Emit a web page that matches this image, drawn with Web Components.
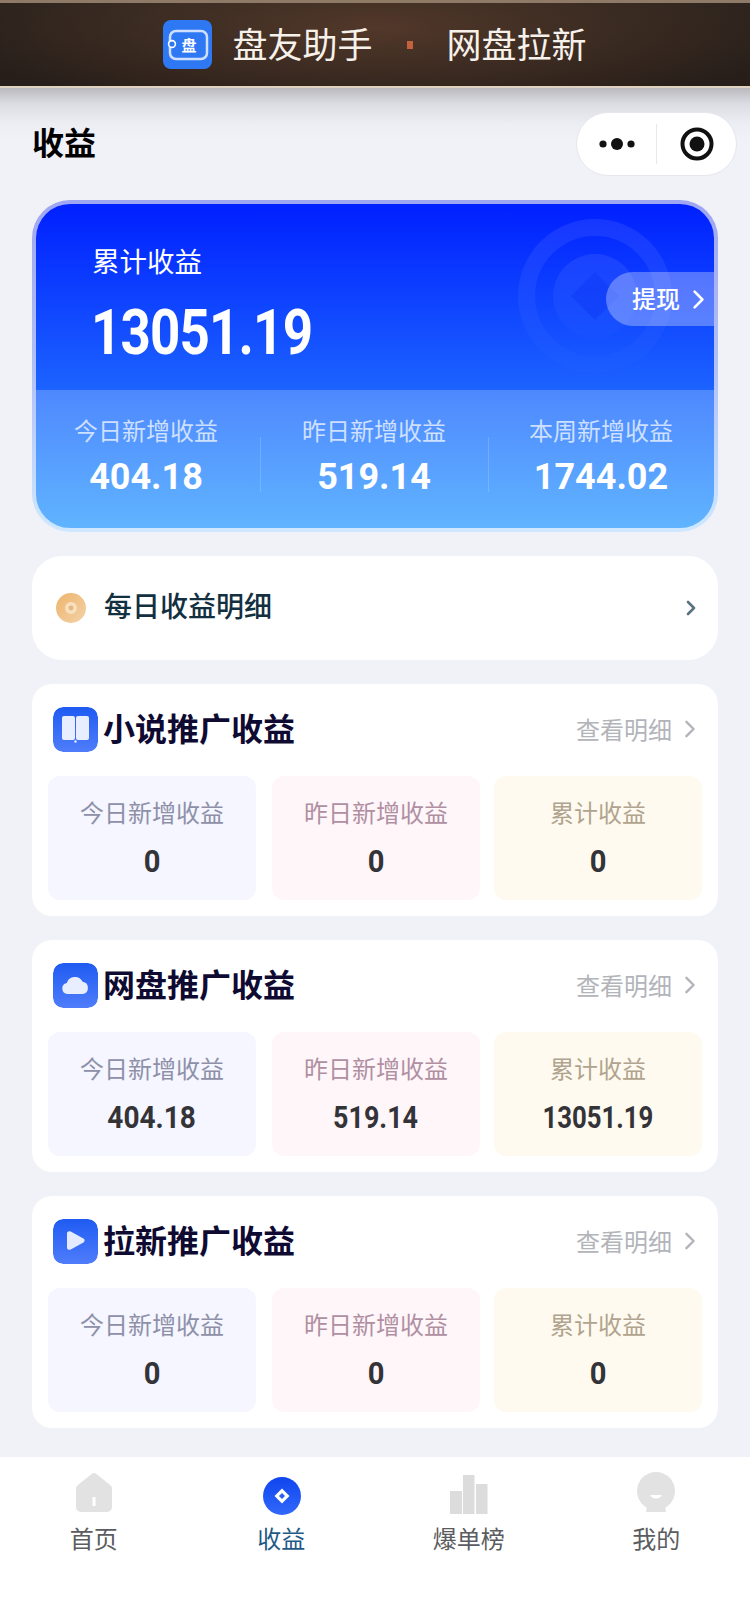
<!DOCTYPE html>
<html lang="zh">
<head>
<meta charset="utf-8">
<title>收益</title>
<style>
  html, body { margin: 0; padding: 0; }
  body {
    width: 750px;
    height: 1624px;
    overflow: hidden;
    background: #f0f2f8;
    font-family: "Noto Sans CJK SC", "Noto Sans", sans-serif;
  }
  main { display: flex; flex-direction: column; gap: 24px; padding: 0 32px; }
</style>
</head>
<body>
<top-banner></top-banner>
<page-head>收益</page-head>
<main>
  <hero-card total="13051.19">
    <hero-stat label="今日新增收益" value="404.18"></hero-stat>
    <hero-stat label="昨日新增收益" value="519.14"></hero-stat>
    <hero-stat label="本周新增收益" value="1744.02"></hero-stat>
  </hero-card>
  <daily-row>每日收益明细</daily-row>
  <income-section title="小说推广收益" icon="book" today="0" yesterday="0" total="0"></income-section>
  <income-section title="网盘推广收益" icon="cloud" today="404.18" yesterday="519.14" total="13051.19"></income-section>
  <income-section title="拉新推广收益" icon="play" today="0" yesterday="0" total="0"></income-section>
</main>
<tab-bar>
  <tab-item icon="home">首页</tab-item>
  <tab-item icon="coin" active>收益</tab-item>
  <tab-item icon="bars">爆单榜</tab-item>
  <tab-item icon="me">我的</tab-item>
</tab-bar>

<script>
const chevron = (w, h, color, sw) => `<svg width="${w}" height="${h}" viewBox="0 0 10 16" fill="none" stroke="${color}" stroke-width="${sw}" stroke-linecap="round" stroke-linejoin="round"><path d="M2 2l6 6-6 6"/></svg>`;

class TopBanner extends HTMLElement {
  constructor() {
    super();
    this.attachShadow({ mode: "open" });
    this.shadowRoot.innerHTML = `
      <style>
        :host {
          display: flex;
          justify-content: center;
          align-items: center;
          box-sizing: border-box;
          height: 88px;
          border-top: 3px solid #8f7a68;
          border-bottom: 2px solid #e0d2c0;
          background:
            radial-gradient(ellipse 420px 90px at 50% 30%, rgba(100,66,48,.68), rgba(60,40,30,0)),
            linear-gradient(#2b231d, #271e19);
          color: #f6f1ea;
          font-size: 35px;
          line-height: 44px;
        }
        svg { display: block; margin-right: 20px; }
        span { padding-bottom: 3px; }
        #dot { width: 6px; height: 8px; padding: 0; margin: 0 34px; background: #c4623e; }
      </style>
      <svg width="49" height="49" viewBox="0 0 49 49">
        <rect width="49" height="49" rx="8" fill="#2f78f4"/>
        <rect x="7" y="11" width="37" height="28" rx="6" fill="none" stroke="#cfe0ff" stroke-width="2.5"/>
        <circle cx="9" cy="24" r="3.4" fill="#2f78f4" stroke="#fff" stroke-width="1.6"/>
        <text x="26" y="31" text-anchor="middle" font-size="15" font-weight="700" fill="#fff" font-family="Noto Sans CJK SC">盘</text>
      </svg>
      <span>盘友助手</span><span id="dot"></span><span>网盘拉新</span>
    `;
  }
}

class PageHead extends HTMLElement {
  constructor() {
    super();
    this.attachShadow({ mode: "open" });
    this.shadowRoot.innerHTML = `
      <style>
        :host {
          display: flex;
          justify-content: space-between;
          align-items: center;
          height: 112px;
          box-sizing: border-box;
          padding: 0 13px 0 32px;
          background: linear-gradient(#b9b9be 0, #dcdde3 16px, #eceef4 36px, #f0f2f8 52px);
          font-size: 32px;
          font-weight: 700;
          color: #000;
        }
        #name { padding-bottom: 6px; }
        #capsule {
          display: flex;
          align-items: center;
          width: 161px;
          height: 64px;
          margin-top: -1px;
          box-sizing: border-box;
          border: 1px solid #e6e7ec;
          border-radius: 32px;
          background: #fff;
        }
        #capsule > div { flex: 1; display: flex; justify-content: center; }
        #line { width: 1px; height: 40px; background: #e8e8e8; flex: none !important; }
      </style>
      <span id="name"><slot></slot></span>
      <div id="capsule">
        <div><svg width="36" height="14" viewBox="0 0 36 14" fill="#111"><circle cx="4" cy="7" r="3.6"/><circle cx="18" cy="7" r="6"/><circle cx="32" cy="7" r="3.6"/></svg></div>
        <div id="line"></div>
        <div><svg width="34" height="34" viewBox="0 0 34 34"><circle cx="17" cy="17" r="14.5" fill="none" stroke="#111" stroke-width="4"/><circle cx="17" cy="17" r="7.5" fill="#111"/></svg></div>
      </div>
    `;
  }
}

class HeroCard extends HTMLElement {
  constructor() {
    super();
    this.attachShadow({ mode: "open" });
    this.shadowRoot.innerHTML = `
      <style>
        :host {
          display: block;
          height: 332px;
          box-sizing: border-box;
          padding: 4px;
          border-radius: 38px;
          overflow: hidden;
          background: linear-gradient(#9fa6f2, #b0c0f8 50%, #cfe8ff);
          color: #fff;
        }
        #inner { height: 100%; border-radius: 34px; overflow: hidden; display: flex; flex-direction: column; }
        #top {
          position: relative;
          height: 186px;
          box-sizing: border-box;
          padding: 36px 0 0 56px;
          background: linear-gradient(#0020ff, #1c63ff);
        }
        #label { font-size: 27.5px; line-height: 40px; }
        #total {
          display: block;
          width: max-content;
          margin: 18px 0 0 -1px;
          font: 700 63px/70px Roboto, sans-serif;
          letter-spacing: -1px;
          transform: scaleX(.84);
          transform-origin: 0 50%;
        }
        #mark { position: absolute; left: 482px; top: 15px; }
        #draw {
          position: absolute;
          right: 0;
          top: 68px;
          display: flex;
          align-items: center;
          gap: 12px;
          box-sizing: border-box;
          width: 108px;
          height: 54px;
          padding-left: 26px;
          border-radius: 27px 0 0 27px;
          background: rgba(255,255,255,.3);
          font-size: 24px;
          font-weight: 500;
        }
        #draw span { padding-bottom: 4px; }
        #stats {
          flex: 1;
          display: grid;
          grid-template-columns: 224px 228px 1fr;
          padding: 22px 0 0;
          background: linear-gradient(#4e88ff, #60b4ff);
        }
      </style>
      <div id="inner">
        <div id="top">
          <svg id="mark" width="154" height="154" viewBox="0 0 154 154" fill="none">
            <defs><linearGradient id="fade" x1="0" y1="0" x2="0" y2="1"><stop offset="0" stop-color="#fff" stop-opacity=".08"/><stop offset="1" stop-color="#fff" stop-opacity=".01"/></linearGradient></defs>
            <circle cx="77" cy="77" r="68.5" stroke="url(#fade)" stroke-width="17"/>
            <circle cx="77" cy="77" r="42" fill="url(#fade)"/>
            <path d="M77 53l24 24-24 24-24-24z" fill="#0a35f0" fill-opacity=".35"/>
          </svg>
          <div id="label">累计收益</div>
          <span id="total"></span>
          <div id="draw"><span>提现</span>${chevron(13, 21, "#fff", 2)}</div>
        </div>
        <div id="stats"><slot></slot></div>
      </div>
    `;
  }
  connectedCallback() {
    this.shadowRoot.querySelector("#total").textContent = this.getAttribute("total");
  }
}

class HeroStat extends HTMLElement {
  constructor() {
    super();
    this.attachShadow({ mode: "open" });
    this.shadowRoot.innerHTML = `
      <style>
        :host { display: block; position: relative; text-align: center; }
        :host(:first-child) { padding-right: 4px; }
        :host(:not(:first-child))::before {
          content: "";
          position: absolute;
          left: 0;
          top: 25px;
          width: 1px;
          height: 55px;
          background: rgba(255,255,255,.16);
        }
        #l { font-size: 24px; line-height: 36px; color: rgba(255,255,255,.72); }
        #v { margin-top: 7px; font: 700 36px/44px Roboto, sans-serif; }
      </style>
      <div id="l"></div><div id="v"></div>
    `;
  }
  connectedCallback() {
    this.shadowRoot.querySelector("#l").textContent = this.getAttribute("label");
    this.shadowRoot.querySelector("#v").textContent = this.getAttribute("value");
  }
}

class DailyRow extends HTMLElement {
  constructor() {
    super();
    this.attachShadow({ mode: "open" });
    this.shadowRoot.innerHTML = `
      <style>
        :host {
          display: flex;
          align-items: center;
          height: 104px;
          box-sizing: border-box;
          padding: 0 22px 0 24px;
          border-radius: 30px;
          background: #fff;
          font-size: 28px;
          font-weight: 500;
          color: #12303f;
        }
        svg { display: block; flex: none; }
        #coin { margin-right: 18px; }
        #name { flex: 1; padding-bottom: 6px; }
      </style>
      <svg id="coin" width="30" height="30" viewBox="0 0 30 30">
        <defs><linearGradient id="g" x1="0" y1="0" x2="1" y2="1"><stop offset="0" stop-color="#eeb46c"/><stop offset="1" stop-color="#f3d2a6"/></linearGradient></defs>
        <circle cx="15" cy="15" r="15" fill="url(#g)"/>
        <circle cx="15" cy="15" r="6" fill="#f8dfc0"/>
        <circle cx="15" cy="15" r="2.4" fill="#e9b57a"/>
      </svg>
      <span id="name"><slot></slot></span>
      ${chevron(10, 16, "#5a7280", 2.6)}
    `;
  }
}

const SECTION_ICONS = {
  book: `<rect x="9" y="9" width="13" height="24" rx="2" fill="#e9eeff"/><rect x="23" y="9" width="13" height="24" rx="2" fill="#e9eeff"/><circle cx="22.5" cy="34.5" r="1.2" fill="#e9eeff"/>`,
  cloud: `<path d="M14.500 31a5.500 5.500 0 0 1-.7-10.900A8.500 8.500 0 0 1 29.600 18.800 6.200 6.200 0 0 1 30 31z" fill="#e9eeff"/>`,
  play: `<path d="M14 14.500C14 12.500 16 11.600 17.700 12.500L30.400 19.600C32 20.500 32 22.500 30.400 23.400L17.700 30.500C16 31.400 14 30.500 14 28.500Z" fill="#e4eaff"/>`,
};

class IncomeSection extends HTMLElement {
  constructor() {
    super();
    this.attachShadow({ mode: "open" });
    this.shadowRoot.innerHTML = `
      <style>
        :host {
          display: block;
          height: 232px;
          box-sizing: border-box;
          padding: 0 16px;
          border-radius: 20px;
          background: #fff;
        }
        #head { display: flex; align-items: center; height: 92px; padding: 0 6px 2px 5px; box-sizing: border-box; }
        #icon { flex: none; margin-right: 5px; border-radius: 10px; display: block; }
        #title { flex: 1; font-size: 32px; font-weight: 700; color: #0e0a32; padding-bottom: 4px; }
        #more { display: flex; align-items: center; gap: 12px; font-size: 24px; color: #b2b4ba; }
        #more span { padding-bottom: 2px; }
        #tiles { display: grid; grid-template-columns: 224px 222px 208px; }
      </style>
      <div id="head">
        <svg id="icon" width="45" height="45" viewBox="0 0 45 45"></svg>
        <span id="title"></span>
        <span id="more"><span>查看明细</span>${chevron(12, 20, "#b2b4ba", 2)}</span>
      </div>
      <div id="tiles">
        <stat-tile tone="blue" label="今日新增收益" id="t"></stat-tile>
        <stat-tile tone="pink" label="昨日新增收益" id="y"></stat-tile>
        <stat-tile tone="cream" label="累计收益" id="a"></stat-tile>
      </div>
    `;
  }
  connectedCallback() {
    const root = this.shadowRoot;
    const name = this.getAttribute("icon");
    root.querySelector("#title").textContent = this.getAttribute("title");
    root.querySelector("#icon").innerHTML = `
      <defs><linearGradient id="bg" x1="0" y1="0" x2="0" y2="1"><stop offset="0" stop-color="#1f5bf2"/><stop offset="1" stop-color="#4f7dfb"/></linearGradient></defs>
      <rect width="45" height="45" rx="10" fill="url(#bg)"/>${SECTION_ICONS[name]}`;
    root.querySelector("#t").setAttribute("value", this.getAttribute("today"));
    root.querySelector("#y").setAttribute("value", this.getAttribute("yesterday"));
    root.querySelector("#a").setAttribute("value", this.getAttribute("total"));
  }
}

class StatTile extends HTMLElement {
  constructor() {
    super();
    this.attachShadow({ mode: "open" });
    this.shadowRoot.innerHTML = `
      <style>
        :host {
          display: block;
          width: 208px;
          height: 124px;
          box-sizing: border-box;
          padding-top: 18px;
          border-radius: 12px;
          text-align: center;
        }
        :host([tone="blue"]) { background: #f5f6ff; color: #8e90a8; }
        :host([tone="pink"]) { background: #fff6fa; color: #b08fa2; }
        :host([tone="cream"]) { background: #fffaf0; color: #b0a48e; }
        #l { font-size: 24px; line-height: 36px; }
        #v { margin-top: 11px; font: 700 32px/40px Roboto, sans-serif; color: #333338; }
        #v span { display: inline-block; }
      </style>
      <div id="l"></div><div id="v"><span></span></div>
    `;
  }
  static get observedAttributes() {
    return ["label", "value"];
  }
  attributeChangedCallback() {
    const value = this.getAttribute("value") || "";
    this.shadowRoot.querySelector("#l").textContent = this.getAttribute("label") || "";
    const span = this.shadowRoot.querySelector("#v span");
    span.textContent = value;
    // the reference digits are condensed and its 1 is narrower than the rest
    const ones = value.split("1").length - 1;
    span.style.transform = `scaleX(${0.91 - 0.035 * ones})`;
  }
}

class TabBar extends HTMLElement {
  constructor() {
    super();
    this.attachShadow({ mode: "open" });
    this.shadowRoot.innerHTML = `
      <style>
        :host {
          display: grid;
          grid-template-columns: repeat(4, 1fr);
          height: 167px;
          margin-top: 29px;
          background: #fff;
        }
      </style>
      <slot></slot>
    `;
  }
}

const TAB_ICONS = {
  home: `<path d="M20 1c.8 0 1.500.3 2.100.8l14.300 11.400c1 .8 1.600 2 1.600 3.300V35a5 5 0 0 1-5 5H7a5 5 0 0 1-5-5V16.500c0-1.300.6-2.500 1.600-3.300L17.900 1.800C18.500 1.300 19.200 1 20 1z" fill="#e2e2e2"/><rect x="18.500" y="25" width="3" height="9" fill="#fff"/>`,
  coin: `<defs><linearGradient id="c" x1="0" y1="0" x2="0" y2="1"><stop offset="0" stop-color="#0f45ee"/><stop offset="1" stop-color="#3268fa"/></linearGradient></defs><circle cx="21" cy="24" r="19" fill="url(#c)"/><path d="M21 16.500l7.500 7.500-7.500 7.500-7.500-7.500z" fill="#fff"/><path d="M21 21l3 3-3 3-3-3z" fill="#2b5cf4"/>`,
  bars: `<rect x="1" y="19" width="12" height="23" fill="#dcdcdc"/><rect x="14" y="3" width="11.500" height="39" fill="#dcdcdc"/><rect x="27" y="12" width="11.500" height="30" fill="#dcdcdc"/>`,
  me: `<circle cx="20" cy="19" r="19" fill="#e2e2e2"/><path d="M11 32h18l1 8H10z" fill="#e2e2e2"/><path d="M14 23c1.500 4.500 10.500 4.500 12 0z" fill="#fff"/>`,
};

class TabItem extends HTMLElement {
  constructor() {
    super();
    this.attachShadow({ mode: "open" });
    this.shadowRoot.innerHTML = `
      <style>
        :host {
          display: flex;
          flex-direction: column;
          align-items: center;
          padding-top: 15px;
          font-size: 24px;
          line-height: 36px;
          color: #5a5c60;
        }
        :host([active]) { color: #1f5a86; }
        svg { display: block; margin-bottom: 4px; }
      </style>
      <svg width="40" height="44" viewBox="0 0 40 44" overflow="visible"></svg>
      <slot></slot>
    `;
  }
  connectedCallback() {
    this.shadowRoot.querySelector("svg").innerHTML = TAB_ICONS[this.getAttribute("icon")];
  }
}

customElements.define("top-banner", TopBanner);
customElements.define("page-head", PageHead);
customElements.define("hero-card", HeroCard);
customElements.define("hero-stat", HeroStat);
customElements.define("daily-row", DailyRow);
customElements.define("stat-tile", StatTile);
customElements.define("income-section", IncomeSection);
customElements.define("tab-bar", TabBar);
customElements.define("tab-item", TabItem);
</script>
</body>
</html>
